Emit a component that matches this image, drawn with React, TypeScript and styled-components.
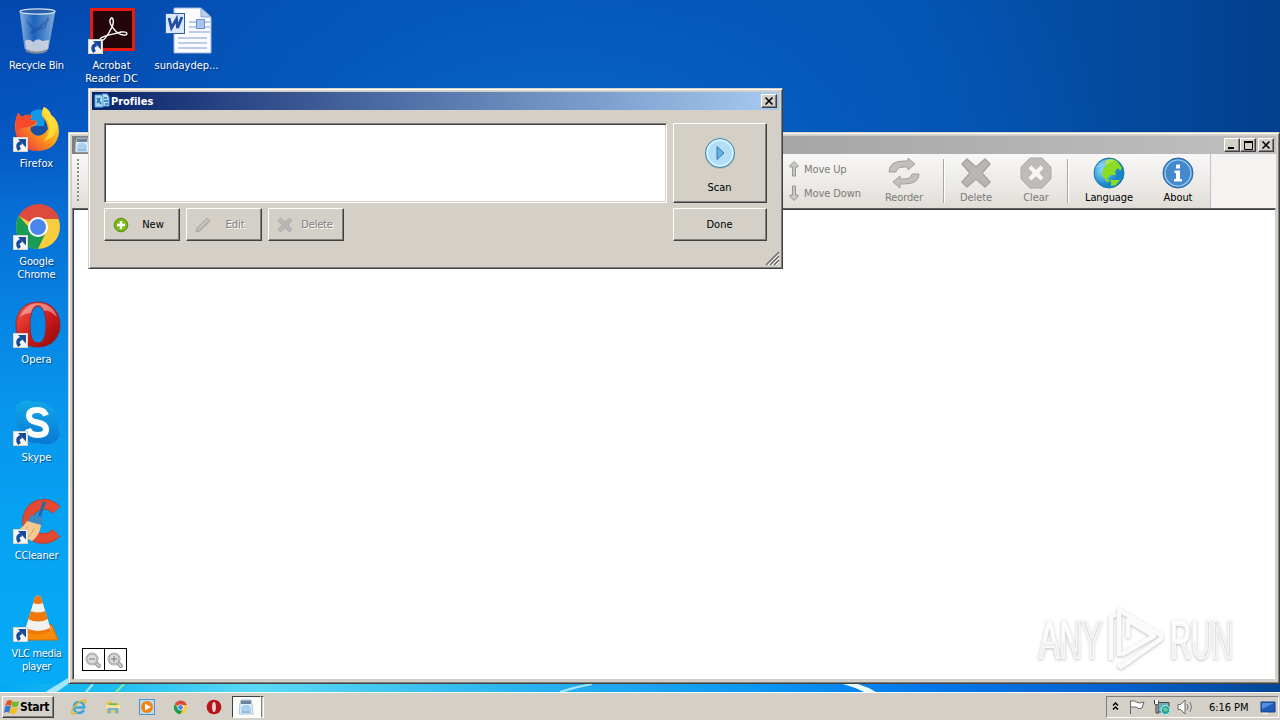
import React from "react";
import styled, { createGlobalStyle, css } from "styled-components";

const Global = createGlobalStyle`
  * { box-sizing: border-box; }
  body { margin: 0; overflow: hidden; font-family: "DejaVu Sans Condensed", "DejaVu Sans", sans-serif; font-stretch: condensed; font-size: 11px; line-height: 13px; }
  svg { display: block; overflow: visible; flex: none; }
`;

const raised = css`
  border: 1px solid;
  border-color: #fff #404040 #404040 #fff;
  box-shadow: inset -1px -1px 0 #808080;
`;

const Desktop = styled.div`
  position: relative;
  width: 1280px;
  height: 720px;
  overflow: hidden;
  background:
    linear-gradient(rgba(6, 90, 200, 0) 0, rgba(6, 96, 205, 0.6) 130px, #066bd2 200px, #0683e2 310px, #0894ec 400px, #06a2f2 520px, #06acf6 690px) 0 0 / 90px 100% no-repeat,
    radial-gradient(ellipse 560px 300px at 560px 150px, #0866c8 0%, rgba(6, 92, 190, 0.7) 50%, rgba(3, 80, 175, 0) 100%),
    linear-gradient(90deg, #0448ae 0, #0450b4 35%, #0453b2 70%, #034a9e 88%, #033f8c 100%);
  display: flex;
  flex-direction: column;
  justify-content: space-between;
`;

const IconGrid = styled.div`
  display: grid;
  grid-template-columns: repeat(3, 75px);
  grid-auto-rows: 98px;
  padding-top: 5px;
  margin-left: -1px;
  z-index: 0;
`;

const Shortcut = styled.div<{ $col: number; $row: number }>`
  grid-column: ${(p) => p.$col};
  grid-row: ${(p) => p.$row};
  display: flex;
  flex-direction: column;
  align-items: center;
  gap: 4px;
  color: #fff;
  text-align: center;
  text-shadow: 1px 1px 1px rgba(0, 20, 70, 0.6);
`;

const ShortcutLabel = styled.span<{ $track?: number }>`
  white-space: pre;
  letter-spacing: ${(p) => p.$track ?? 0}px;
`;

const MainWindow = styled.section`
  position: absolute;
  left: 68px;
  top: 132px;
  width: 1212px;
  height: 552px;
  background: #d4d0c8;
  border: 1px solid;
  border-color: #d4d0c8 #404040 #404040 #d4d0c8;
  box-shadow: inset 1px 1px 0 #fff, inset -1px -1px 0 #808080;
  padding: 3px;
  display: flex;
  flex-direction: column;
`;

const TitleBar = styled.header<{ $active?: boolean }>`
  height: 18px;
  flex: none;
  display: flex;
  align-items: center;
  padding: 0 2px;
  color: #fff;
  font-weight: bold;
  background: ${(p) => (p.$active ? "linear-gradient(90deg, #0a246a, #a6caf0)" : "linear-gradient(90deg, #808080, #c0c0c0)")};
`;

const Caption = styled.span`
  flex: 1;
  margin-left: 1px;
  letter-spacing: -0.05px;
`;

const CaptionButton = styled.span<{ $gap?: number }>`
  width: 16px;
  height: 14px;
  margin-left: ${(p) => p.$gap ?? 0}px;
  background: #d4d0c8;
  ${raised}
  display: flex;
  align-items: center;
  justify-content: center;
`;

const Toolbar = styled.div`
  height: 54px;
  flex: none;
  background: #f5f3f2;
  display: flex;
`;

const ToolStrip = styled.div`
  width: 1139px;
  display: flex;
  background: linear-gradient(#f8f7f6, #edebe8 55%, #e0ddd8);
  border-right: 1px solid #c3c1c8;
`;

const Grip = styled.div`
  width: 2px;
  height: 44px;
  margin: 5px 710px 0 5px;
  background: repeating-linear-gradient(#8f8d8a 0 2px, transparent 2px 4px);
`;

const MoveGroup = styled.div`
  width: 90px;
  padding-top: 3px;
  display: flex;
  flex-direction: column;
  color: #7c7a77;
`;

const MoveItem = styled.div`
  height: 24px;
  display: flex;
  align-items: center;
  gap: 5px;
  letter-spacing: -0.1px;
`;

const ToolButton = styled.div<{ $w: number; $on?: boolean; $after?: number }>`
  width: ${(p) => p.$w}px;
  margin-right: ${(p) => p.$after ?? 0}px;
  padding-top: 3px;
  display: flex;
  flex-direction: column;
  align-items: center;
  gap: 2px;
  letter-spacing: -0.1px;
  color: ${(p) => (p.$on ? "#000" : "#7c7a77")};
`;

const Divider = styled.div`
  width: 2px;
  height: 44px;
  margin-top: 5px;
  border-left: 1px solid #aaa7a2;
  border-right: 1px solid #fff;
`;

const Canvas = styled.main`
  flex: 1;
  background: #fff;
  border: 1px solid;
  border-color: #606060 #d4d0c8 #d4d0c8 #808080;
  box-shadow: inset 1px 1px 0 #404040;
  display: flex;
  align-items: flex-end;
  justify-content: space-between;
  padding: 0 42px 8px 9px;
`;

const ZoomGroup = styled.div`
  display: flex;
  border: 1px solid #000;
  background: #fff;
  width: 45px;
  height: 23px;
`;

const ZoomButton = styled.div`
  flex: 1;
  display: flex;
  align-items: center;
  justify-content: center;
  padding-right: 1px;
  & + & { border-left: 1px solid #000; }
`;

const Watermark = styled.div`
  display: flex;
  align-items: center;
  gap: 6px;
  height: 64px;
  filter: drop-shadow(0 1px 1.5px rgba(0, 0, 0, 0.25));
`;

const MarkWord = styled.span<{ $w: number; $scale: number }>`
  font: 400 53px/54px "Liberation Sans", sans-serif;
  color: transparent;
  background: linear-gradient(#fff 54%, #eee 56%);
  background-clip: text;
  -webkit-background-clip: text;
  -webkit-text-stroke: 2px #f8f8f8;
  width: ${(p) => p.$w}px;
  white-space: nowrap;
  transform: scaleX(${(p) => p.$scale});
  transform-origin: left;
  padding-top: 2px;
`;

const Dialog = styled.section`
  position: absolute;
  left: 88px;
  top: 88px;
  width: 695px;
  height: 181px;
  background: #d4d0c8;
  border: 1px solid;
  border-color: #d4d0c8 #404040 #404040 #d4d0c8;
  box-shadow: inset 1px 1px 0 #fff, inset -1px -1px 0 #808080;
  padding: 3px;
  display: flex;
  flex-direction: column;
`;

const DialogBody = styled.div`
  flex: 1;
  padding: 13px 12px 0;
  display: grid;
  grid-template-columns: 563px 94px;
  grid-template-rows: 80px 33px 1fr;
  column-gap: 6px;
  row-gap: 5px;
`;

const ProfileList = styled.div`
  background: #fff;
  border: 1px solid;
  border-color: #808080 #fff #fff #808080;
  box-shadow: inset 1px 1px 0 #404040, inset -1px -1px 0 #d4d0c8;
`;

const ButtonRow = styled.div`
  display: flex;
  gap: 6px;
`;

const PushButton = styled.div<{ $off?: boolean; $track?: number }>`
  width: 76px;
  height: 33px;
  ${raised}
  display: flex;
  align-items: center;
  padding: 0 2px 0 8px;
  letter-spacing: ${(p) => p.$track ?? 0}px;
  color: ${(p) => (p.$off ? "#808080" : "#000")};
  text-shadow: ${(p) => (p.$off ? "1px 1px 0 #fff" : "none")};
`;

const PushLabel = styled.span`
  flex: 1;
  text-align: center;
`;

const WideButton = styled.div`
  ${raised}
  display: flex;
  flex-direction: column;
  align-items: center;
  justify-content: center;
  gap: 12px;
  padding-right: 1px;
`;

const ScanButton = styled(WideButton)`
  padding-top: 5px;
`;

const GripCorner = styled.div`
  grid-column: 2;
  display: flex;
  justify-content: flex-end;
  align-items: flex-end;
  margin-right: -12px;
`;

const Taskbar = styled.footer`
  height: 28px;
  background: #d4d0c8;
  border-top: 1px solid #fff;
  display: flex;
  align-items: center;
  padding: 1px 1px 0 2px;
  z-index: 0;
`;

const StartButton = styled.div`
  width: 52px;
  height: 22px;
  ${raised}
  display: flex;
  align-items: center;
  padding-left: 1px;
  font-weight: bold;
  font-size: 12px;
  letter-spacing: -0.3px;
`;

const QuickLaunch = styled.div`
  display: flex;
  align-items: center;
  margin-left: 17px;
  gap: 18px;
`;

const ActiveTask = styled.div`
  width: 29px;
  height: 22px;
  margin-left: 10px;
  border: 1px solid;
  border-color: #404040 #fff #fff #404040;
  background: #fbfbfa;
  display: flex;
  align-items: center;
  justify-content: center;
  padding-right: 2px;
`;

const TaskEdge = styled.div`
  width: 3px;
  height: 22px;
  border: 1px solid;
  border-color: #404040 #fff #fff #808080;
`;

const Tray = styled.div`
  width: 173px;
  height: 22px;
  margin-left: auto;
  border: 1px solid;
  border-color: #808080 #fff #fff #808080;
  display: flex;
  align-items: center;
  padding: 0 2px 0 5px;
`;

const Clock = styled.span`
  margin: 0 8px 0 15px;
  flex: 1;
  white-space: nowrap;
  letter-spacing: -0.05px;
`;

const Wallpaper = styled.svg`
  position: absolute;
  left: 0;
  top: 0;
`;

const Arrow = () => (
  <g transform="translate(0 3)">
    <rect x="0.500" y="31.500" width="14" height="14" fill="#f6f6f6" stroke="#d8d4c8" />
    <path d="M6.500 44Q2.500 38.500 8.500 36.500" fill="none" stroke="#174a98" strokeWidth="3.500" />
    <path d="M5 33H13V41.500Z" fill="#174a98" />
  </g>
);

const Big = ({ children, arrow, dy = 0 }: { children: React.ReactNode; arrow?: boolean; dy?: number }) => (
  <svg width="48" height="50" viewBox="0 0 48 50">
    <g transform={`translate(0 ${dy})`}>{children}</g>
    {arrow && <Arrow />}
  </svg>
);

const RecycleIcon = () => (
  <Big>
    <defs>
      <linearGradient id="bin" x1="0" x2="1">
        <stop offset="0" stopColor="#b8d4ef" stopOpacity=".75" />
        <stop offset=".4" stopColor="#2f72c0" stopOpacity=".6" />
        <stop offset="1" stopColor="#a5c8e8" stopOpacity=".8" />
      </linearGradient>
    </defs>
    <path d="M7 6L12 44Q24 50 35 44L42 6Z" fill="url(#bin)" stroke="#7fa6cf" strokeWidth=".8" />
    <path d="M12 36Q16 33 20 37Q25 32 29 36L36 35L35 44Q24 50 13 44Z" fill="#d8dcdf" opacity=".85" />
    <ellipse cx="24.500" cy="6.500" rx="17.500" ry="2.600" fill="#2460ae" stroke="#d3dfeb" strokeWidth="1.200" />
    <path d="M13 45.500Q24 50 34 45.500" fill="none" stroke="#858c92" strokeWidth="2" />
    <path d="M14 16L22 26L36 14M17 28L32 22L35 12" fill="none" stroke="#123f86" strokeWidth="2" opacity=".4" />
  </Big>
);

const AcrobatIcon = () => (
  <Big arrow>
    <rect x="3.500" y="4.500" width="42" height="40" fill="#24060a" stroke="#e81b0e" strokeWidth="3" />
    <path d="M12 36C10 31 23 30 33 27C41 26 40 31 35 30C28 29 21 19 22 15C24 10 27 15 24 22C20 30 15 37 12 36Z" fill="none" stroke="#fff" strokeWidth="1.400" />
  </Big>
);

const WordIcon = () => (
  <Big>
    <path d="M11 3H38L48 12V48H11Z" fill="#fbfcff" stroke="#9fb3d8" />
    <path d="M38 3V12H48Z" fill="#bdd0ef" stroke="#8ba6d2" />
    <path d="M26 17H47M26 22H47M26 27H47M15 33H44M15 38H44M15 43H44" stroke="#7f9bd0" />
    <rect x="33.500" y="14.500" width="8" height="9" fill="#a9c5ec" stroke="#6b93cc" />
    <rect x="2.500" y="8.500" width="19" height="20" fill="#dce8fa" stroke="#2c5cb0" />
    <path d="M6 13L8.500 23L13.500 14L14.500 23L19 12" fill="none" stroke="#2350a5" strokeWidth="2.800" />
  </Big>
);

const FirefoxIcon = () => (
  <Big arrow dy={3}>
    <defs>
      <linearGradient id="fox" x1="1" y1="0" x2="0" y2="1">
        <stop offset="0" stopColor="#fff044" />
        <stop offset=".5" stopColor="#ff9a16" />
        <stop offset="1" stopColor="#e81850" />
      </linearGradient>
    </defs>
    <circle cx="25" cy="20" r="14" fill="#164fa4" />
    <path d="M18 6Q25 1 32 5L31 20H18Z" fill="#1298e8" />
    <path d="M5 7L9 11Q14 7 19 10L17 14L24 15Q24 20 18 21Q16 25 22 29Q29 32 35 23Q34 15 29 10Q28 5 31 1Q37 4 38 9Q46 14 46 26Q44 44 25 45Q7 45 3 29Q0 17 5 7Z" fill="url(#fox)" />
    <path d="M31 1Q28 8 35 15Q39 25 31 35Q44 31 44 20Q42 11 38 9Q36 3 31 1Z" fill="#ffe13b" opacity=".85" />
    <path d="M5 7L9 11Q14 7 19 10L17 14L24 15Q22 20 15 21Q6 22 4 26Q1 16 5 7Z" fill="#f64a2d" />
  </Big>
);

const ChromeDisc = () => (
  <g>
    <circle cx="25" cy="25" r="22" fill="#f9cd3e" />
    <path d="M25 25L6 14A22 22 0 0 1 46.500 17H25Z" fill="#dd4b3e" />
    <path d="M25 25L20 30L6 14A22 22 0 0 0 25 47L33 30Z" fill="#189b57" />
    <circle cx="25" cy="25" r="10" fill="#fff" />
    <circle cx="25" cy="25" r="8" fill="#4a86ec" />
  </g>
);

const RedO = () => (
  <g>
    <defs>
      <linearGradient id="op" x2="1" y2="1">
        <stop offset="0" stopColor="#f5604a" />
        <stop offset=".5" stopColor="#d21d1d" />
        <stop offset="1" stopColor="#8e0709" />
      </linearGradient>
    </defs>
    <path fillRule="evenodd" d="M25 2C11 2 3 12 3 25S11 47 25 47S47 37 47 25S39 2 25 2ZM25 6Q33 7 33 25T25 43T17 25T25 6Z" fill="url(#op)" stroke="#9d1518" strokeWidth=".7" />
    <path d="M7 17Q12 4 25 3Q40 4 44 17Q35 9 31 11Q29 5 25 5Q20 5 18 13Q12 13 7 17Z" fill="#fff" opacity=".4" />
  </g>
);

const SkypeIcon = () => (
  <Big arrow dy={3}>
    <defs>
      <linearGradient id="sk" x2="0" y2="1">
        <stop stopColor="#12a8ea" />
        <stop offset="1" stopColor="#0878d0" />
      </linearGradient>
    </defs>
    <path d="M4 5Q12 -2 20 2Q35 0 43 12Q46 20 45 28Q49 36 42 42Q34 46 26 43Q14 44 7 34Q2 26 4 18Q1 9 4 5Z" fill="url(#sk)" />
    <path d="M33 15.500Q31 10 24.500 10Q16 10 16 16Q16 21 24.500 22.500Q33 24 33 29.500Q33 35 24.500 35Q17 35 15 29" fill="none" stroke="#fff" strokeWidth="6" />
  </Big>
);

const CCleanerIcon = () => (
  <Big arrow dy={2}>
    <path d="M43.500 13Q36 5 26 8Q15 12 14.500 25Q15 38 26 41Q36 43 43.500 36" fill="none" stroke="#c03826" strokeWidth="10.500" />
    <path d="M43.500 13Q36 5 26 8Q15 12 14.500 25Q15 38 26 41Q36 43 43.500 36" fill="none" stroke="#e24930" strokeWidth="9" />
    <path d="M31 6L26 21" stroke="#1b6cae" strokeWidth="3" strokeLinecap="round" />
    <path d="M18 18L30 20L29 29L14 26Z" fill="#398ac3" />
    <path d="M14 24L28 28Q27 38 19 44L1 35Q9 32 14 24Z" fill="#f4ca91" />
    <path d="M15 29Q12 34 8 37M21 31Q19 38 14 41" stroke="#d3a772" fill="none" />
  </Big>
);

const VlcIcon = () => (
  <Big arrow dy={1}>
    <path d="M12 35L14 31H39L45 46H8Z" fill="#f58a0b" stroke="#d66b05" />
    <path d="M22 3Q25 0 28 3L38 36Q25 44 12 36Z" fill="#f1f1f1" />
    <path d="M22 3Q25 0 28 3L30 9Q25 11 20 9ZM18 17Q25 20 32 17L35 25Q25 30 15 25ZM13 34Q25 40 37 34L38 37Q25 44 11 37Z" fill="#ee7909" />
  </Big>
);

const PrinterIcon = () => (
  <svg width="16" height="16" viewBox="0 0 16 16">
    <path d="M3 1H13L14 5L15 15H1L2 5Z" fill="#e4eff8" stroke="#9fb6ca" strokeWidth=".8" />
    <path d="M3 1.500H13V5H3Z" fill="#6d8296" />
    <path d="M5 6H11L13 9V14H3V9Z" fill="#a9d2f2" />
    <path d="M4 13H12" stroke="#7fa9cd" />
  </svg>
);

const ProfilesIcon = () => (
  <svg width="16" height="16" viewBox="0 0 16 16">
    <path d="M1 2H7L9 4V14H1Z" fill="#a9d9f3" stroke="#5ba5d6" />
    <path d="M8 1H13L15 4V13H9V4Z" fill="#b9e2f7" stroke="#5ba5d6" />
    <path d="M3 5L7 11M3 10L6 5M10 5H13M10 8H14M11 11H14" stroke="#1f74b5" strokeWidth="1.500" />
  </svg>
);

const CloseGlyph = () => (
  <svg width="8" height="8" viewBox="0 0 8 8"><path d="M.5 .5L7.500 7.500M7.500 .5L.5 7.500" stroke="#000" strokeWidth="1.600" /></svg>
);

const UpArrow = ({ down }: { down?: boolean }) => (
  <svg width="10" height="16" viewBox="0 0 10 16">
    <path transform={down ? "rotate(180 5 8)" : undefined} d="M5 .5L9 4.500V6H6.500V15H3.500V6H1V4.500Z" fill="#c9c8c6" stroke="#8f8e8c" strokeWidth=".9" />
  </svg>
);

const ReorderIcon = () => (
  <svg width="32" height="32" viewBox="0 0 32 32" fill="#c2c1bf" stroke="#a09f9d" strokeLinejoin="round">
    <path d="M1 15Q1 4 16 4H20V1L27 7L20 13V10H16Q9 10 8 15Z" />
    <path d="M31 17Q31 27 16 27H12V31L5 25L12 19V22H16Q23 22 24 17Z" />
  </svg>
);

const CrossPath = "M2 7L7 2L16 10L25 2L30 7L22 16L30 25L25 30L16 22L7 30L2 25L10 16Z";
const CrossIcon = ({ s }: { s: number }) => (
  <svg width={s} height={s} viewBox="0 0 32 32"><path d={CrossPath} fill="#b8b7b5" stroke="#a5a4a2" strokeWidth="1.500" strokeLinejoin="round" /></svg>
);

const ClearIcon = () => (
  <svg width="32" height="32" viewBox="0 0 32 32">
    <path d="M10 1H22L31 10V22L22 31H10L1 22V10Z" fill="#bdbcba" stroke="#acaaa8" />
    <path d={CrossPath} transform="translate(7.500 7.500) scale(.53)" fill="#f7f6f4" />
  </svg>
);

const GlobeIcon = () => (
  <svg width="32" height="32" viewBox="0 0 32 32">
    <defs>
      <radialGradient id="globe" cx=".3" cy=".4">
        <stop stopColor="#8bdcff" />
        <stop offset="1" stopColor="#1786c9" />
      </radialGradient>
    </defs>
    <circle cx="16" cy="16" r="15" fill="url(#globe)" stroke="#1c76a7" />
    <path d="M12 4Q18 0 24 4L29 11L27 14L25 11L22 14L23 18L18 18L14 22L18 24L14 25L9 18L10 12L13 9ZM18 23L27 23L23 28L18 29Z" fill="#8bdc24" />
    <path d="M3 11Q9 0 21 3Q17 8 3 11Z" fill="#fff" opacity=".25" />
  </svg>
);

const InfoIcon = () => (
  <svg width="32" height="32" viewBox="0 0 32 32">
    <circle cx="16" cy="16" r="15" fill="#4389cb" stroke="#28629e" />
    <circle cx="16" cy="16" r="13" fill="none" stroke="#a4cff1" strokeWidth="1.200" />
    <path d="M14 7.500H18V11.500H14ZM12.500 13.500H18V22H20V24.500H12V22H14V16H12.500Z" fill="#fff" />
  </svg>
);

const PlayIcon = () => (
  <svg width="32" height="32" viewBox="0 0 32 32">
    <circle cx="16" cy="17" r="15" fill="#8f9598" opacity=".5" />
    <circle cx="16" cy="16" r="14.500" fill="#b2defa" stroke="#397fae" />
    <circle cx="16" cy="16" r="12.800" fill="none" stroke="#e0f5ff" strokeWidth="1.500" />
    <path d="M13 9.500V22.500L20 16Z" fill="#6bb0db" stroke="#2e7db4" />
  </svg>
);

const PlusIcon = () => (
  <svg width="16" height="16" viewBox="0 0 16 16">
    <circle cx="8" cy="8" r="6.800" fill="#7cba17" stroke="#4c8610" strokeWidth=".9" />
    <path d="M8 4V12M4 8H12" stroke="#fff" strokeWidth="2.500" />
  </svg>
);

const PencilIcon = () => (
  <svg width="16" height="16" viewBox="0 0 16 16">
    <path d="M1 15L2 11L12 1L15 4L5 14Z" fill="#bbb9b5" stroke="#aaa8a4" />
    <path d="M4 11L12 3" stroke="#d4d2ce" />
  </svg>
);

const Magnifier = ({ plus }: { plus?: boolean }) => (
  <svg width="16" height="16" viewBox="0 0 16 16" fill="none">
    <path d="M10.500 10.500L14 14" stroke="#999" strokeWidth="4" strokeLinecap="round" />
    <path d="M11 11L14 14" stroke="#ccc" strokeWidth="2" strokeLinecap="round" />
    <circle cx="7" cy="7" r="5.500" fill="#ddd" stroke="#999" strokeWidth="2" />
    <circle cx="7" cy="7" r="5.500" stroke="#ccc" />
    <path d={plus ? "M4 7H10M7 4V10" : "M4 7H10"} stroke="#777" />
  </svg>
);

const WatermarkLogo = () => (
  <svg width="56" height="64" viewBox="0 0 56 64" fill="none" stroke="#fbfbfb" strokeWidth="4.500" strokeLinejoin="round">
    <path d="M3 53V10L8 7" />
    <path d="M11 49V3L53 28V32L13 60L10 57" />
    <path d="M13 48L46 29L20 13V31" />
  </svg>
);

const FlagLogo = () => (
  <svg width="16" height="16" viewBox="0 0 16 16">
    <path d="M3 2Q6 0 8 2L7 7Q4 5 1 7Z" fill="#e5531d" />
    <path d="M8.500 2Q12 4 15 2L14 7Q11 9 7.500 7Z" fill="#74b82b" />
    <path d="M1 7.500Q4 6 7 7.500L5 14Q3 12 0 14Z" fill="#3978cf" />
    <path d="M7.500 7.500Q11 10 14 8L12 14Q9 16 5.500 14Z" fill="#f6bd22" />
  </svg>
);

const IeIcon = () => (
  <svg width="16" height="16" viewBox="0 0 16 16" fill="none">
    <path d="M13 11Q11 14 8 14Q3 14 3 8.500Q3 3 8 3Q13 3 13 8.500H4" stroke="#3aa5e0" strokeWidth="2.600" />
    <path d="M13 5Q17 0 13 1Q8 2 2 9Q-1 15 2 15Q4 15 6 13" stroke="#e7b922" strokeWidth="1.400" />
  </svg>
);

const FolderIcon = () => (
  <svg width="16" height="16" viewBox="0 0 17 16">
    <path d="M1 2H7L8 4H15V14H1Z" fill="#eac75a" />
    <path d="M4 4H13V7H4Z" fill="#72b957" />
    <path d="M1 6H16V10H1Z" fill="#f7e49a" />
    <path d="M3 15V9H14V15H11V11H6V15Z" fill="#67b0df" />
  </svg>
);

const MediaIcon = () => (
  <svg width="16" height="16" viewBox="0 0 16 16">
    <rect x=".5" y=".5" width="15" height="15" fill="#b5dcf3" stroke="#4f93c6" />
    <circle cx="8" cy="8" r="6" fill="#f5830f" />
    <path d="M6 4.500V11.500L12 8Z" fill="#fff" />
  </svg>
);

const TrayIcons = () => (
  <svg width="82" height="18" viewBox="0 0 82 18" fill="none">
    <path d="M1 7.500L3.500 5L6 7.500M1 11.500L3.500 9L6 11.500" stroke="#000" strokeWidth="1.500" />
    <path d="M18.500 16V2.500M19 3Q22 2 24 4Q28 6 32 4L30 10Q27 12 24 9H19" fill="#fff" stroke="#666" />
    <path d="M46 4.500H57V14H46Z" fill="#6dacb4" stroke="#444" />
    <path d="M42.500 2V6H46V2M44 6V15H47" stroke="#333" />
    <path d="M43 2H46V6H43Z" fill="#fff" />
    <circle cx="53.500" cy="12" r="4.500" fill="#21a2a3" stroke="#bff" />
    <path d="M50.500 11L53.500 9L56.500 12L53.500 14Z" fill="#6cc88a" />
    <path d="M66 6.500H68.500L73 2V16L68.500 11.500H66Z" fill="#fff" stroke="#666" strokeLinejoin="round" />
    <path d="M75 6Q77 9 75 12M78 4Q81 9 78 14" stroke="#777" />
  </svg>
);

const ScreenIcon = () => (
  <svg width="16" height="15" viewBox="0 0 16 15">
    <path d="M1 2H15V12H1Z" fill="#205bb8" stroke="#173f83" />
    <path d="M2 3H14L2 9Z" fill="#508ee2" />
    <path d="M2 13.500H8" stroke="#eee" strokeWidth="1.500" />
  </svg>
);

const shortcuts = [
  { col: 1, row: 1, label: "Recycle Bin", track: -0.2, icon: <RecycleIcon /> },
  { col: 2, row: 1, label: "Acrobat\nReader DC", icon: <AcrobatIcon /> },
  { col: 3, row: 1, label: "sundaydep...", icon: <WordIcon /> },
  { col: 1, row: 2, label: "Firefox", track: 0.1, icon: <FirefoxIcon /> },
  { col: 1, row: 3, label: "Google\nChrome", track: -0.1, icon: <Big arrow dy={1}><ChromeDisc /></Big> },
  { col: 1, row: 4, label: "Opera", icon: <Big arrow dy={1}><RedO /></Big> },
  { col: 1, row: 5, label: "Skype", icon: <SkypeIcon /> },
  { col: 1, row: 6, label: "CCleaner", track: -0.2, icon: <CCleanerIcon /> },
  { col: 1, row: 7, label: "VLC media\nplayer", track: -0.35, icon: <VlcIcon /> },
];

export default function App() {
  return (
    <>
      <Global />
      <Desktop>
        <Wallpaper width="1280" height="720" viewBox="0 0 1280 720">
          <defs>
            <linearGradient id="edge" x2="1">
              <stop stopColor="#06a8f4" />
              <stop offset=".08" stopColor="#1cbcf0" />
              <stop offset=".2" stopColor="#5cd8f4" />
              <stop offset=".4" stopColor="#2cb4ee" />
              <stop offset=".6" stopColor="#0c94f0" />
              <stop offset=".72" stopColor="#0678ea" />
              <stop offset=".88" stopColor="#0462cc" />
              <stop offset="1" stopColor="#044694" />
            </linearGradient>
          </defs>
          <path d="M0 684H1280V692H0Z" fill="url(#edge)" />
          <path d="M42 694L68 678V684L54 694Z" fill="#c9f1ff" opacity=".8" />
          <path d="M86 692L93 684" stroke="#a5e6f5" strokeWidth="2" />
          <path d="M116 692L124 684" stroke="#8fe79a" strokeWidth="2" />
          <path d="M560 692Q575 687 592 684" stroke="#a9e4fa" strokeWidth="2" fill="none" />
          <path d="M843 684H858Q868 687 876 692H864Q854 687 843 684Z" fill="#e8faff" />
        </Wallpaper>
        <IconGrid>
          {shortcuts.map((s) => (
            <Shortcut key={s.label} $col={s.col} $row={s.row}>
              {s.icon}
              <ShortcutLabel $track={s.track}>{s.label}</ShortcutLabel>
            </Shortcut>
          ))}
        </IconGrid>

        <MainWindow>
          <TitleBar>
            <PrinterIcon />
            <Caption />
            <CaptionButton><svg width="8" height="8"><path d="M0 7H6" stroke="#000" strokeWidth="2" /></svg></CaptionButton>
            <CaptionButton><svg width="9" height="9"><path d="M.5 1V8.500H8.500V1M0 1H9" fill="none" stroke="#000" /><path d="M0 1H9" stroke="#000" strokeWidth="2" /></svg></CaptionButton>
            <CaptionButton $gap={2}><CloseGlyph /></CaptionButton>
          </TitleBar>
          <Toolbar>
            <ToolStrip>
              <Grip />
              <MoveGroup>
                <MoveItem><UpArrow />Move Up</MoveItem>
                <MoveItem><UpArrow down />Move Down</MoveItem>
              </MoveGroup>
              <ToolButton $w={50} $after={14}><ReorderIcon />Reorder</ToolButton>
              <Divider />
              <ToolButton $w={62}><CrossIcon s={32} />Delete</ToolButton>
              <ToolButton $w={58} $after={2}><ClearIcon />Clear</ToolButton>
              <Divider />
              <ToolButton $w={80} $on><GlobeIcon />Language</ToolButton>
              <ToolButton $w={58} $on><InfoIcon />About</ToolButton>
            </ToolStrip>
          </Toolbar>
          <Canvas>
            <ZoomGroup>
              <ZoomButton><Magnifier /></ZoomButton>
              <ZoomButton><Magnifier plus /></ZoomButton>
            </ZoomGroup>
            <Watermark>
              <MarkWord $w={63} $scale={0.58}>ANY</MarkWord>
              <WatermarkLogo />
              <MarkWord $w={63} $scale={0.55}>RUN</MarkWord>
            </Watermark>
          </Canvas>
        </MainWindow>

        <Dialog>
          <TitleBar $active>
            <ProfilesIcon />
            <Caption>Profiles</Caption>
            <CaptionButton><CloseGlyph /></CaptionButton>
          </TitleBar>
          <DialogBody>
            <ProfileList />
            <ScanButton><PlayIcon />Scan</ScanButton>
            <ButtonRow>
              <PushButton><PlusIcon /><PushLabel>New</PushLabel></PushButton>
              <PushButton $off><PencilIcon /><PushLabel>Edit</PushLabel></PushButton>
              <PushButton $off $track={-0.2}><CrossIcon s={16} /><PushLabel>Delete</PushLabel></PushButton>
            </ButtonRow>
            <WideButton>Done</WideButton>
            <GripCorner>
              <svg width="13" height="13"><path d="M0 13L13 0M4 13L13 4M8 13L13 8" stroke="#707070" strokeWidth="1.500" /><path d="M2 13L13 2M6 13L13 6M10 13L13 10" stroke="#fff" /></svg>
            </GripCorner>
          </DialogBody>
        </Dialog>

        <Taskbar>
          <StartButton><FlagLogo />Start</StartButton>
          <QuickLaunch>
            <IeIcon />
            <FolderIcon />
            <MediaIcon />
            <svg width="15" height="15" viewBox="0 0 50 50"><ChromeDisc /></svg>
            <svg width="16" height="16" viewBox="0 0 50 50"><circle cx="25" cy="25" r="23" fill="#b7151c" /><ellipse cx="25" cy="25" rx="6" ry="16" fill="#e9d2d0" /></svg>
          </QuickLaunch>
          <ActiveTask><PrinterIcon /></ActiveTask>
          <TaskEdge />
          <Tray>
            <TrayIcons />
            <Clock>6:16 PM</Clock>
            <ScreenIcon />
          </Tray>
        </Taskbar>
      </Desktop>
    </>
  );
}
